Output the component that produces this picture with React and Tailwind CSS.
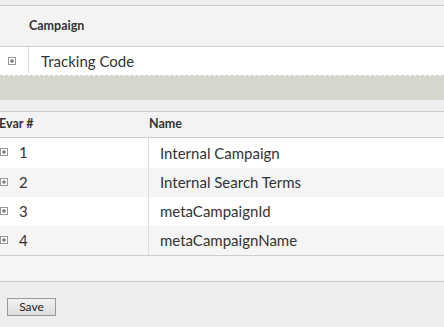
const evars = [
  { id: 1, name: "Internal Campaign" },
  { id: 2, name: "Internal Search Terms" },
  { id: 3, name: "metaCampaignId" },
  { id: 4, name: "metaCampaignName" },
];

const PlusBox = () => (
  <svg width="8" height="8" viewBox="0 0 8 8" className="block">
    <rect x="0.5" y="0.5" width="7" height="7" fill="#fff" stroke="#999" />
    <path d="M2 4h4M4 2v4" stroke="#555" />
  </svg>
);

const App = () => {
  return (
    <div
      className="w-[444px] h-[327px] overflow-hidden bg-[#eeeeee] text-[#333]"
      style={{ fontFamily: "Lato, 'Liberation Sans', sans-serif" }}
    >
      <div className="h-[5px]" />

      {/* campaign table */}
      <div className="border-t border-[#cccccc]">
        <div className="h-[41px] bg-[#f3f3f3] border-b border-[#cccccc] flex items-center pl-[29px]">
          <span className="text-[12.5px] font-bold">Campaign</span>
        </div>
        <div className="h-[29px] bg-white flex border-b border-dashed border-[#cccccc]">
          <div className="w-[29px] border-r border-[#dddddd] flex items-center pl-[8px]">
            <PlusBox />
          </div>
          <div className="flex items-center pl-[12px] text-[15px]">Tracking Code</div>
        </div>
        <div className="h-[24px] bg-[#d6d6ce]" />
      </div>

      <div className="h-[11px]" />

      {/* evar table */}
      <div className="border-t border-[#cccccc] -ml-[9px]">
        <div className="h-[26px] bg-[#f3f3f3] border-b border-[#cccccc] flex items-center text-[12.5px] font-bold">
          <div className="w-[157px] pl-[8px]">Evar #</div>
          <div className="pl-[1px]">Name</div>
        </div>
        {evars.map((row, i) => (
          <div
            key={row.id}
            className={`flex ${i % 2 ? "bg-[#f5f5f5]" : "bg-white"} ${i === 0 ? "h-[30px]" : "h-[29px]"}`}
          >
            <div className="w-[158px] border-r border-[#dddddd] flex items-start pt-[10px] pl-[9px] gap-[11px]">
              <PlusBox />
              <span className="text-[15px] leading-none -mt-[3px]">{row.id}</span>
            </div>
            <div className="flex items-center pl-[11px] text-[15px]">{row.name}</div>
          </div>
        ))}
      </div>

      <div className="h-[27px] bg-[#f5f5f5] border-t border-b border-[#cccccc]" />

      <div className="pt-[11px] pl-[7px]">
        <button className="w-[49px] h-[18px] border border-[#999999] bg-gradient-to-b from-[#f2f2f2] to-[#dddddd] text-[12px] leading-none text-[#222]">
          Save
        </button>
      </div>
    </div>
  );
};

export default App;
